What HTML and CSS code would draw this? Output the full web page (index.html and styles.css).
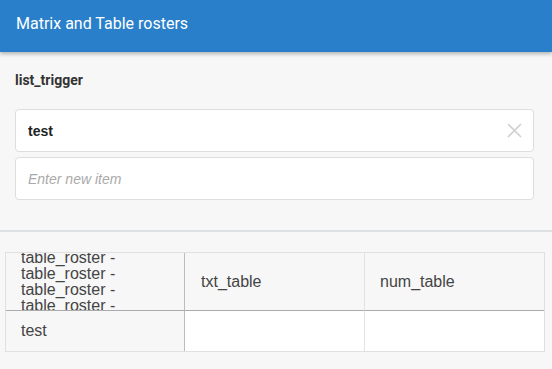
FILE: index.html
```html
<!DOCTYPE HTML>
<html>

<head>
    <title>Matrix and Table rosters</title>
    <meta name="viewport" content="width=device-width, initial-scale=1">
    <link rel="stylesheet" href="styles.css">
</head>

<body>
    <div class="topnav">
        <h1>Matrix and Table rosters</h1>
    </div>
    <div class="question">
        <div class="label">list_trigger</div>
        <div class="item">
            <input type="text" class="item-input filled" value="test">
            <button class="clear" title="Remove">
                <svg width="15" height="15" viewBox="0 0 15 15">
                    <path d="M1 1 L14 14 M14 1 L1 14" stroke="#cfcfcf" stroke-width="1.6" fill="none" />
                </svg>
            </button>
        </div>
        <div class="item">
            <input type="text" class="item-input" placeholder="Enter new item">
        </div>
    </div>
    <div class="divider"></div>
    <div class="roster">
        <div class="cell head first">
            <div class="clip">table_roster - table_roster - table_roster - table_roster -</div>
        </div>
        <div class="cell head mid">txt_table</div>
        <div class="cell head">num_table</div>
        <div class="cell body first">test</div>
        <div class="cell body mid input"></div>
        <div class="cell body input"></div>
    </div>
</body>

</html>
```

FILE: styles.css
```css
html {
    font-family: "Liberation Sans", Arial, sans-serif;
}

body {
    margin: 0;
    background-color: #f7f7f7;
}

.topnav {
    height: 52px;
    box-sizing: border-box;
    padding: 14px 16px 0 16px;
    background-color: #2a7fca;
    box-shadow: 0 2px 4px rgba(0, 0, 0, .28);
}

h1 {
    margin: 0;
    font-family: Roboto, sans-serif;
    font-size: 16px;
    font-weight: normal;
    line-height: 20px;
    color: white;
}

.question {
    padding: 20px 18px 0 15px;
}

.label {
    font-family: Roboto, sans-serif;
    font-size: 14px;
    font-weight: bold;
    line-height: 17px;
    color: #333;
    margin-bottom: 20px;
}

.item {
    display: flex;
    align-items: center;
    height: 43px;
    box-sizing: border-box;
    margin-bottom: 5px;
    background-color: #fff;
    border: 1px solid #dedede;
    border-radius: 4px;
}

.item-input {
    flex: 1;
    min-width: 0;
    height: 100%;
    padding: 0 12px;
    border: none;
    outline: none;
    background: transparent;
    font-family: "Liberation Sans", Arial, sans-serif;
    font-size: 14px;
    color: #222;
}

.item-input.filled {
    font-weight: bold;
}

.item-input::placeholder {
    font-style: italic;
    color: #aaa;
}

.clear {
    display: flex;
    padding: 0;
    margin-right: 11px;
    border: none;
    background: none;
}

.divider {
    height: 2px;
    margin-top: 30px;
    background-color: #dde0e3;
}

.roster {
    display: grid;
    grid-template-columns: 179px 180px 179px;
    grid-template-rows: 58px 40px;
    margin: 20px 7px 18px 5px;
    border: 1px solid #e0e0e0;
}

.cell {
    display: flex;
    align-items: center;
    padding: 0 15px;
    overflow: hidden;
    font-size: 16px;
    color: #444;
    background-color: #f7f7f7;
}

.cell.mid {
    padding-left: 16px;
    border-right: 1px solid #e3e3e3;
}

.cell.first {
    border-right: 1px solid #bcbcbc;
}

.cell.head {
    border-bottom: 1px solid #ababab;
}

.cell.input {
    background-color: #fff;
}

.clip {
    line-height: 1;
}
```
